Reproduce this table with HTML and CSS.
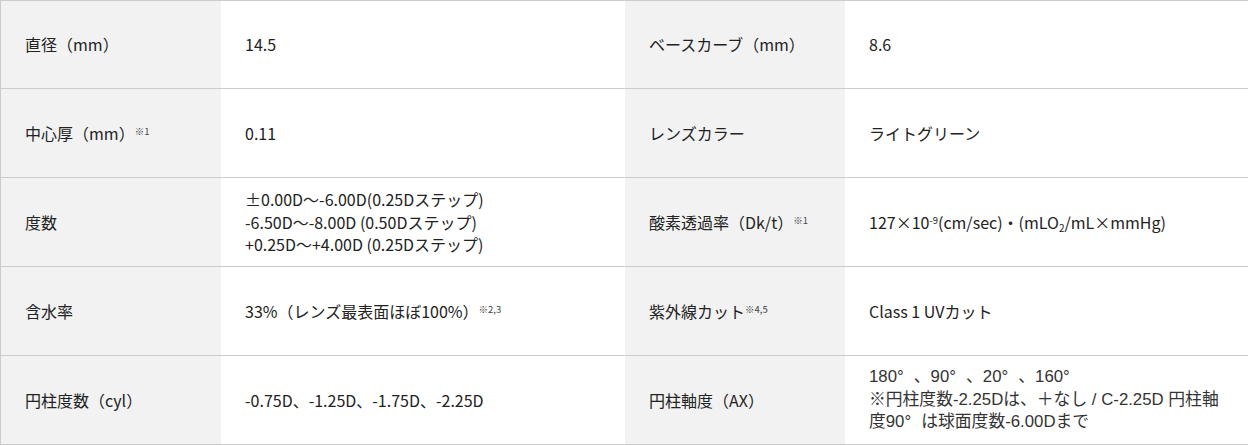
FILE: index.html
```html
<!DOCTYPE html>
<html lang="ja">
<head>
<meta charset="utf-8">
<title>スペック</title>
<link rel="stylesheet" href="styles.css">
</head>
<body>
<table class="spec">
  <colgroup>
    <col class="c-label"><col class="c-value"><col class="c-label"><col class="c-value">
  </colgroup>
  <tbody>
    <tr class="first">
      <th class="label">直径（mm）</th>
      <td class="value">14.5</td>
      <th class="label">ベースカーブ（mm）</th>
      <td class="value">8.6</td>
    </tr>
    <tr>
      <th class="label">中心厚（mm）<sup class="note">※1</sup></th>
      <td class="value">0.11</td>
      <th class="label">レンズカラー</th>
      <td class="value">ライトグリーン</td>
    </tr>
    <tr>
      <th class="label">度数</th>
      <td class="value">±0.00D〜-6.00D(0.25Dステップ)<br>-6.50D〜-8.00D (0.50Dステップ)<br>+0.25D〜+4.00D (0.25Dステップ)</td>
      <th class="label">酸素透過率（Dk/t）<sup class="note">※1</sup></th>
      <td class="value">127×10<sup class="exp">-9</sup>(cm/sec)・(mLO<sub class="sub">2</sub>/mL×mmHg)</td>
    </tr>
    <tr>
      <th class="label">含水率</th>
      <td class="value">33%（レンズ最表面ほぼ100%）<sup class="note">※2,3</sup></td>
      <th class="label">紫外線カット<sup class="note">※4,5</sup></th>
      <td class="value">Class 1 UVカット</td>
    </tr>
    <tr>
      <th class="label">円柱度数（cyl）</th>
      <td class="value">-0.75D、-1.25D、-1.75D、-2.25D</td>
      <th class="label">円柱軸度（AX）</th>
      <td class="value alt">180<span class="deg">°</span>、90<span class="deg">°</span>、20<span class="deg">°</span>、160<span class="deg">°</span><br>※円柱度数-2.25Dは、＋なし / C-2.25D 円柱軸度90<span class="deg">°</span>は球面度数-6.00Dまで</td>
    </tr>
  </tbody>
</table>
</body>
</html>
```

FILE: styles.css
```css
html, body {
  margin: 0;
  padding: 0;
  background: #ffffff;
}

body {
  font-family: "Noto Sans CJK JP", "Noto Sans", sans-serif;
  font-size: 16px;
  color: #222222;
}

.spec {
  width: 1248px;
  border-collapse: separate;
  border-spacing: 0;
  border-top: 1px solid #cccccc;
  border-left: 1px solid #cccccc;
  border-right: 1px solid #cccccc;
  table-layout: fixed;
}

.c-label { width: 220px; }
.c-value { width: 404px; }

.spec th,
.spec td {
  height: 89px;
  padding: 0 24px;
  border-bottom: 1px solid #cccccc;
  vertical-align: middle;
  text-align: left;
  font-weight: 400;
  line-height: 22.4px;
  box-sizing: border-box;
}

.spec tr.first th,
.spec tr.first td {
  height: 88px;
}

.label {
  background: #f2f2f2;
}

.value {
  background: #ffffff;
}

.note {
  font-size: 9.5px;
  color: #444444;
  vertical-align: 5px;
  line-height: 0;
}

.exp {
  font-size: 9.5px;
  vertical-align: 5px;
  line-height: 0;
}

.sub {
  font-size: 10px;
  vertical-align: -3px;
  line-height: 0;
}

.alt {
  font-family: "Liberation Sans", "Noto Sans CJK JP", sans-serif;
  font-size: 16.8px;
  line-height: 22px;
  color: #333333;
}

.deg {
  margin-right: 0.6em;
}
```
